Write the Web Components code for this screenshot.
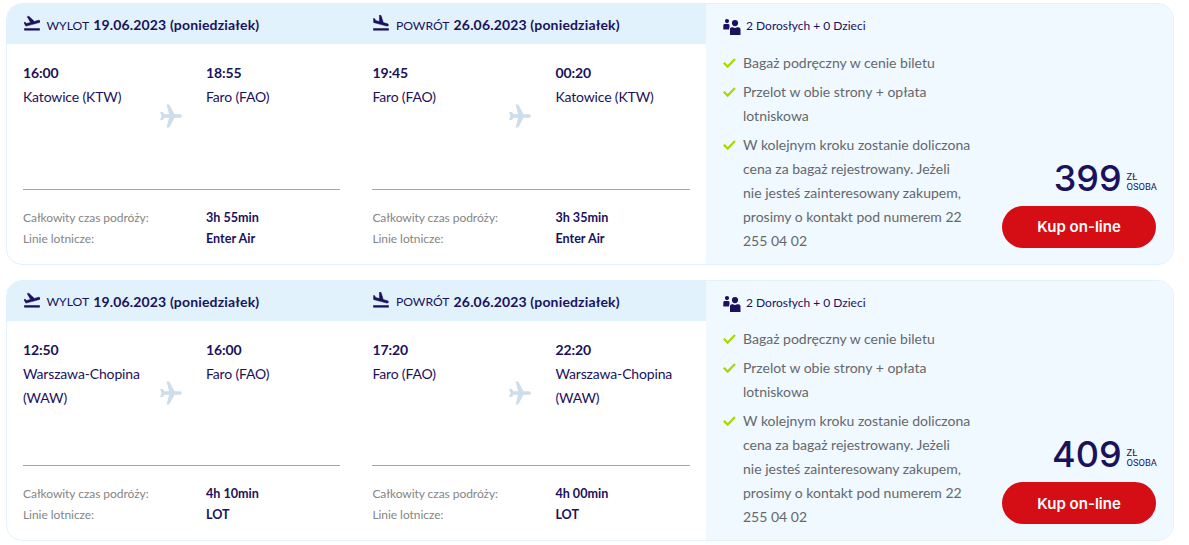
<!DOCTYPE html>
<html lang="pl">
<head>
<meta charset="utf-8">
<title>Loty</title>
<style>
	body {
		margin: 0;
		padding: 3px 15px 0 6px;
		background: #fff;
		color: #1b115c;
		font-family: Lato, 'Noto Sans', sans-serif;
		font-size: 14px;
		line-height: 24px;
	}

	main {
		display: flex;
		flex-direction: column;
		gap: 15px;
	}
</style>
</head>
<body>
<main>
	<flight-offer price="399">
		<flight-leg kind="out" label="WYLOT" date="19.06.2023 (poniedziałek)" start="16:00" end="18:55" duration="3h 55min" airline="Enter Air">
			<span slot="from">Katowice (KTW)</span>
			<span slot="to">Faro (FAO)</span>
		</flight-leg>
		<flight-leg kind="back" label="POWRÓT" date="26.06.2023 (poniedziałek)" start="19:45" end="00:20" duration="3h 35min" airline="Enter Air">
			<span slot="from">Faro (FAO)</span>
			<span slot="to">Katowice (KTW)</span>
		</flight-leg>
	</flight-offer>
	<flight-offer price="409">
		<flight-leg kind="out" label="WYLOT" date="19.06.2023 (poniedziałek)" start="12:50" end="16:00" duration="4h 10min" airline="LOT">
			<span slot="from">Warszawa-Chopina<br>(WAW)</span>
			<span slot="to">Faro (FAO)</span>
		</flight-leg>
		<flight-leg kind="back" label="POWRÓT" date="26.06.2023 (poniedziałek)" start="17:20" end="22:20" duration="4h 00min" airline="LOT">
			<span slot="from">Faro (FAO)</span>
			<span slot="to">Warszawa-Chopina<br>(WAW)</span>
		</flight-leg>
	</flight-offer>
</main>

<script>
// Dumb html template string function
const html = (strings, ...values) => strings.reduce((str, s, i) => str + s + (values[i] ?? ''), '');

const icons = {
	out: ['2 2 20 20', 'M2.5 19h19v2h-19v-2zm19.57-9.36c-.21-.8-1.04-1.28-1.84-1.06L14.92 10l-6.9-6.43-1.93.51 4.14 7.17-4.97 1.33-1.97-1.54-1.45.39 2.59 4.49s7.12-1.9 16.57-4.43c.81-.23 1.28-1.05 1.07-1.85z'],
	back: ['2 2 20 20', 'M2.5 19h19v2h-19v-2zm16.84-3.15c.8.21 1.62-.26 1.84-1.06.21-.8-.26-1.62-1.06-1.84l-5.31-1.42-2.76-9.02L10.12 2v8.28L5.15 8.95l-.93-2.32-1.45-.39v5.17l16.57 4.44z'],
	plane: ['0 0 24 24', 'M22.8 12c0-1-.8-1.8-1.8-1.8h-5.5L10.800 1.400C10.500.8 9.900.5 9.300.5H7.600l2.500 9.700H5.600L3.700 7.900H1.100L2.500 12l-1.400 4.100h2.600l1.900-2.300h4.500L7.600 23.500h1.700c.6 0 1.200-.3 1.500-.9l4.700-8.800H21c1 0 1.800-.8 1.800-1.800z'],
	people: ['0 0 18 18', 'M4 1a2.1 2.1 0 1 1 0 4.2A2.1 2.1 0 0 1 4 1zM1.8 6.1h3.1c.8 0 1.4.3 1.6.7v2.4c-.3.4-.4.9-.4 1.5v.9H.3V7.8c0-1 .5-1.7 1.5-1.7zM12 2a3.1 3.1 0 1 1 0 6.2A3.1 3.1 0 0 1 12 2zM9 9.3h1c1.1.9 2.9.9 4 0h1c1.5 0 2.5.8 2.5 2.2V17H7v-5.500c0-1.400.7-2.200 2-2.200z'],
	check: ['0 0 13 12', 'M1.600 5 4.700 8.100 11.200 1.200 12.800 2.800 4.700 11.200 0 6.600z']
};

// Single-colour icon, sized by its own box
customElements.define(
	'ui-icon',
	class extends HTMLElement {
		connectedCallback() {
			const [box, path] = icons[this.getAttribute('name')];
			this.attachShadow({ mode: 'open' }).innerHTML = html`
				<style>
					:host {
						display: block;
						flex: none;
					}

					svg {
						display: block;
						width: 100%;
						height: 100%;
						fill: currentColor;
						stroke: currentColor;
						stroke-width: var(--icon-stroke, 0);
					}
				</style>
				<svg viewBox="${box}"><path d="${path}"/></svg>
			`;
		}
	}
);

// One direction of the trip
customElements.define(
	'flight-leg',
	class extends HTMLElement {
		connectedCallback() {
			const attr = (name) => this.getAttribute(name);
			this.attachShadow({ mode: 'open' }).innerHTML = html`
				<style>
					:host {
						display: flex;
						flex-direction: column;
						min-width: 0;
					}

					header {
						display: flex;
						align-items: center;
						height: 41px;
						box-sizing: border-box;
						padding: 3px 0 0 17px;
						background: #e1f2fd;
					}

					header ui-icon {
						--icon-stroke: 0.7;
						width: 16px;
						height: 16px;
						margin: -4px 6.5px 0 0;
					}

					header span {
						margin-right: 4px;
						font-size: 12.2px;
						padding-top: 1px;
					}

					header b {
						letter-spacing: 0.16px;
					}

					b {
						font-weight: 700;
					}

					.route {
						display: grid;
						grid-template-columns: 183px 1fr;
						height: 127.8px;
						margin: 0 16px;
						padding-top: 17px;
						border-bottom: 1px solid #a5a5a5;
						position: relative;
					}

					.route b {
						display: block;
						letter-spacing: -0.1px;
					}

					.place {
						letter-spacing: -0.15px;
					}

					.route ui-icon {
						position: absolute;
						left: 136px;
						top: 60px;
						width: 24px;
						height: 24px;
						color: #cddde9;
					}

					.details {
						display: grid;
						grid-template-columns: 183px 1fr;
						margin: 17px 16px 0;
						font-size: 12.6px;
						line-height: 21px;
					}

					.details span {
						color: #858585;
						font-size: 12px;
						letter-spacing: -0.05px;
					}
				</style>
				<header>
					<ui-icon name="${attr('kind')}"></ui-icon>
					<span>${attr('label')}</span><b>${attr('date')}</b>
				</header>
				<div class="route">
					<div><b>${attr('start')}</b><div class="place"><slot name="from"></slot></div></div>
					<div><b>${attr('end')}</b><div class="place"><slot name="to"></slot></div></div>
					<ui-icon name="plane"></ui-icon>
				</div>
				<div class="details">
					<span>Całkowity czas podróży:</span><b>${attr('duration')}</b>
					<span>Linie lotnicze:</span><b>${attr('airline')}</b>
				</div>
			`;
		}
	}
);

// Offer card: both legs on the left, summary and price on the right
customElements.define(
	'flight-offer',
	class extends HTMLElement {
		connectedCallback() {
			this.attachShadow({ mode: 'open' }).innerHTML = html`
				<style>
					:host {
						display: grid;
						grid-template-columns: 699px 1fr;
						grid-template-rows: 100%;
						height: 261.6px;
						box-sizing: border-box;
						border: 1px solid #e1f2fd;
						border-radius: 16px;
						overflow: hidden;
					}

					.legs {
						display: grid;
						grid-template-columns: 349.4px 1fr;
						margin-top: -1px;
					}

					aside {
						display: flex;
						justify-content: space-between;
						box-sizing: border-box;
						background: #f0f9ff;
						padding: 10px 17px 15.8px;
					}

					.people {
						display: flex;
						align-items: center;
						height: 24px;
						gap: 5px;
						font-size: 12px;
					}

					.people ui-icon {
						width: 18px;
						height: 18px;
						margin-top: 2px;
					}

					ul {
						margin: 12.8px 0 0;
						padding: 0;
						list-style: none;
						color: #64686c;
						white-space: nowrap;
					}

					li {
						display: flex;
						gap: 7px;
						margin-bottom: 5px;
					}

					li ui-icon {
						width: 13px;
						height: 12px;
						margin-top: 6px;
						color: #a8d800;
					}

					.buy {
						display: flex;
						flex-direction: column;
						justify-content: flex-end;
						align-items: flex-end;
						font-family: Inter, sans-serif;
					}

					.price {
						display: flex;
						align-items: flex-end;
						gap: 5px;
						margin: 0 -1px 9px 0;
						font-size: 36px;
						font-weight: 500;
						line-height: 38px;
					}

					small {
						font: 400 9.4px/10px Roboto, sans-serif;
						margin-bottom: 5px;
					}

					button {
						width: 154px;
						height: 42px;
						border: 0;
						border-radius: 21px;
						background: #d40e14;
						color: #fff;
						font: 600 15px Inter, sans-serif;
					}
				</style>
				<div class="legs"><slot></slot></div>
				<aside>
					<div>
						<div class="people"><ui-icon name="people"></ui-icon>2 Dorosłych + 0 Dzieci</div>
						<ul>
							<li><ui-icon name="check"></ui-icon><span>Bagaż podręczny w cenie biletu</span></li>
							<li><ui-icon name="check"></ui-icon><span>Przelot w obie strony + opłata<br>lotniskowa</span></li>
							<li><ui-icon name="check"></ui-icon><span>W kolejnym kroku zostanie doliczona<br>cena za bagaż rejestrowany. Jeżeli<br>nie jesteś zainteresowany zakupem,<br>prosimy o kontakt pod numerem 22<br>255 04 02</span></li>
						</ul>
					</div>
					<div class="buy">
						<div class="price">${this.getAttribute('price')}<small>ZŁ<br>OSOBA</small></div>
						<button>Kup on-line</button>
					</div>
				</aside>
			`;
		}
	}
);
</script>
</body>
</html>
